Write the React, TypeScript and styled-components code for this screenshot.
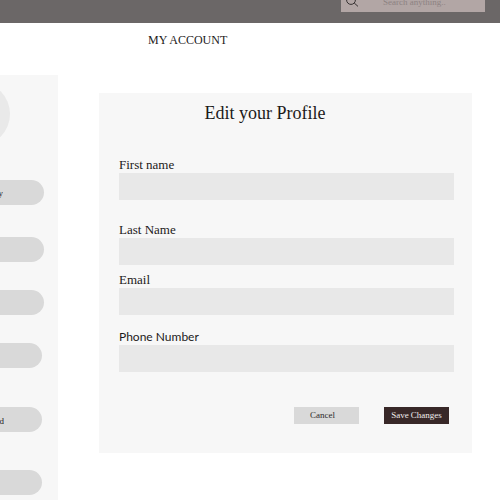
import React from "react";
import styled, { createGlobalStyle } from "styled-components";

const serif = '"Liberation Serif", "Times New Roman", serif';

const GlobalStyle = createGlobalStyle`
  *, *::before, *::after { box-sizing: border-box; }
  body { margin: 0; background: #fff; color: #1c1a1a; font-family: ${serif}; }
  button, input { font: inherit; color: inherit; border: 0; margin: 0; }
`;

const Page = styled.div`
  display: flex;
  flex-direction: column;
  min-height: 100vh;
`;

const Header = styled.header`
  display: flex;
  justify-content: flex-end;
  align-items: flex-start;
  height: 23px;
  padding-right: 15px;
  background: #6b6767;
`;

const SearchBox = styled.label`
  display: flex;
  align-items: flex-start;
  gap: 24px;
  width: 144px;
  height: 12px;
  padding-left: 5px;
  background: #b2a6a5;
  overflow: hidden;
`;

const SearchIcon = styled.svg`
  flex: none;
  width: 13px;
  height: 7px;
`;

const SearchInput = styled.input`
  flex: 1;
  min-width: 0;
  height: 16px;
  margin-top: -6px;
  padding: 0;
  background: transparent;
  font-size: 9px;
  line-height: 16px;
  outline: none;
  &::placeholder { color: #8d8282; opacity: 1; }
`;

const Body = styled.div`
  display: flex;
  flex: 1;
  align-items: stretch;
`;

const Sidebar = styled.aside`
  flex: none;
  width: 58px;
  margin-top: 52px;
  padding-top: 7px;
  background: #f7f7f7;
`;

const Avatar = styled.div`
  width: 10px;
  height: 64px;
  margin-bottom: 34px;
  overflow: hidden;
  display: flex;
  justify-content: flex-end;
  &::after {
    content: "";
    flex: none;
    width: 64px;
    height: 64px;
    border-radius: 50%;
    background: #e9e9e9;
  }
`;

const Menu = styled.nav`
  display: flex;
  flex-direction: column;
`;

const MenuButton = styled.button<{ $width: number; $after: number }>`
  display: flex;
  align-items: center;
  width: ${(p) => p.$width}px;
  height: 25px;
  margin-bottom: ${(p) => p.$after}px;
  padding: 0;
  border-radius: 0 13px 13px 0;
  background: #d9d9d9;
  font-size: 9px;
  line-height: 12px;
`;

const MenuText = styled.span<{ $show: number; $drop: number }>`
  display: flex;
  justify-content: flex-end;
  width: ${(p) => p.$show}px;
  padding-top: ${(p) => p.$drop}px;
  overflow: hidden;
`;

const Main = styled.main`
  flex: 1;
  min-width: 0;
  padding: 10px 28px 20px 41px;
`;

const PageTitle = styled.h1`
  margin: 0 0 45px 49px;
  font-size: 12px;
  line-height: 15px;
  font-weight: 400;
`;

const Card = styled.form`
  display: flex;
  flex-direction: column;
  padding: 8px 18px 29px 20px;
  background: #f7f7f7;
`;

const CardTitle = styled.h2`
  margin: 0 0 44px;
  padding-right: 43px;
  font-size: 18px;
  line-height: 24px;
  font-weight: 400;
  text-align: center;
`;

const Field = styled.div<{ $after: number }>`
  display: flex;
  flex-direction: column;
  margin-bottom: ${(p) => p.$after}px;
`;

const FieldLabel = styled.label<{ $sans?: boolean }>`
  height: 16px;
  margin-top: -12px;
  font-family: ${(p) => (p.$sans ? '"Lato", sans-serif' : serif)};
  font-size: ${(p) => (p.$sans ? 12 : 13)}px;
  line-height: 16px;
`;

const FieldInput = styled.input`
  width: 100%;
  height: 27px;
  padding: 0 8px;
  background: #e8e8e8;
  font-size: 13px;
`;

const Actions = styled.div`
  display: flex;
  justify-content: flex-end;
  gap: 25px;
  padding-right: 5px;
`;

const ActionButton = styled.button<{ $primary?: boolean }>`
  width: 65px;
  height: 17px;
  padding: ${(p) => (p.$primary ? "0" : "0 8px 0 0")};
  background: ${(p) => (p.$primary ? "#382828" : "#d9d9d9")};
  color: ${(p) => (p.$primary ? "#f0eded" : "#2c2929")};
  font-size: 9px;
  line-height: 17px;
  white-space: nowrap;
`;

const menuItems = [
  { text: "y", show: 3, drop: 0, width: 44, after: 32 },
  { text: "", show: 0, drop: 0, width: 44, after: 28 },
  { text: "", show: 0, drop: 0, width: 44, after: 28 },
  { text: "", show: 0, drop: 0, width: 42, after: 39 },
  { text: "d", show: 4, drop: 3, width: 42, after: 38 },
  { text: "", show: 0, drop: 0, width: 42, after: 5 },
];

const fields = [
  { id: "first", label: "First name", type: "text", after: 34 },
  { id: "last", label: "Last Name", type: "text", after: 19 },
  { id: "email", label: "Email", type: "email", after: 26 },
  { id: "phone", label: "Phone Number", type: "tel", sans: true, after: 35 },
];

export default function App() {
  return (
    <Page>
      <GlobalStyle />
      <Header>
        <SearchBox>
          <SearchIcon viewBox="0 0 13 7" fill="none" stroke="#373232" aria-hidden="true">
            <circle cx="5" cy="0" r="4.4" />
            <path d="M8.2 3L12 6.4" />
          </SearchIcon>
          <SearchInput type="search" placeholder="Search anything.." aria-label="Search" />
        </SearchBox>
      </Header>
      <Body>
        <Sidebar>
          <Avatar />
          <Menu aria-label="Account">
            {menuItems.map((item, i) => (
              <MenuButton key={i} type="button" $width={item.width} $after={item.after}>
                {item.text && (
                  <MenuText $show={item.show} $drop={item.drop}>
                    {item.text}
                  </MenuText>
                )}
              </MenuButton>
            ))}
          </Menu>
        </Sidebar>
        <Main>
          <PageTitle>MY ACCOUNT</PageTitle>
          <Card onSubmit={(e) => e.preventDefault()}>
            <CardTitle>Edit your Profile</CardTitle>
            {fields.map((f) => (
              <Field key={f.id} $after={f.after}>
                <FieldLabel htmlFor={f.id} $sans={f.sans}>
                  {f.label}
                </FieldLabel>
                <FieldInput id={f.id} type={f.type} />
              </Field>
            ))}
            <Actions>
              <ActionButton type="button">Cancel</ActionButton>
              <ActionButton type="submit" $primary>
                Save Changes
              </ActionButton>
            </Actions>
          </Card>
        </Main>
      </Body>
    </Page>
  );
}
